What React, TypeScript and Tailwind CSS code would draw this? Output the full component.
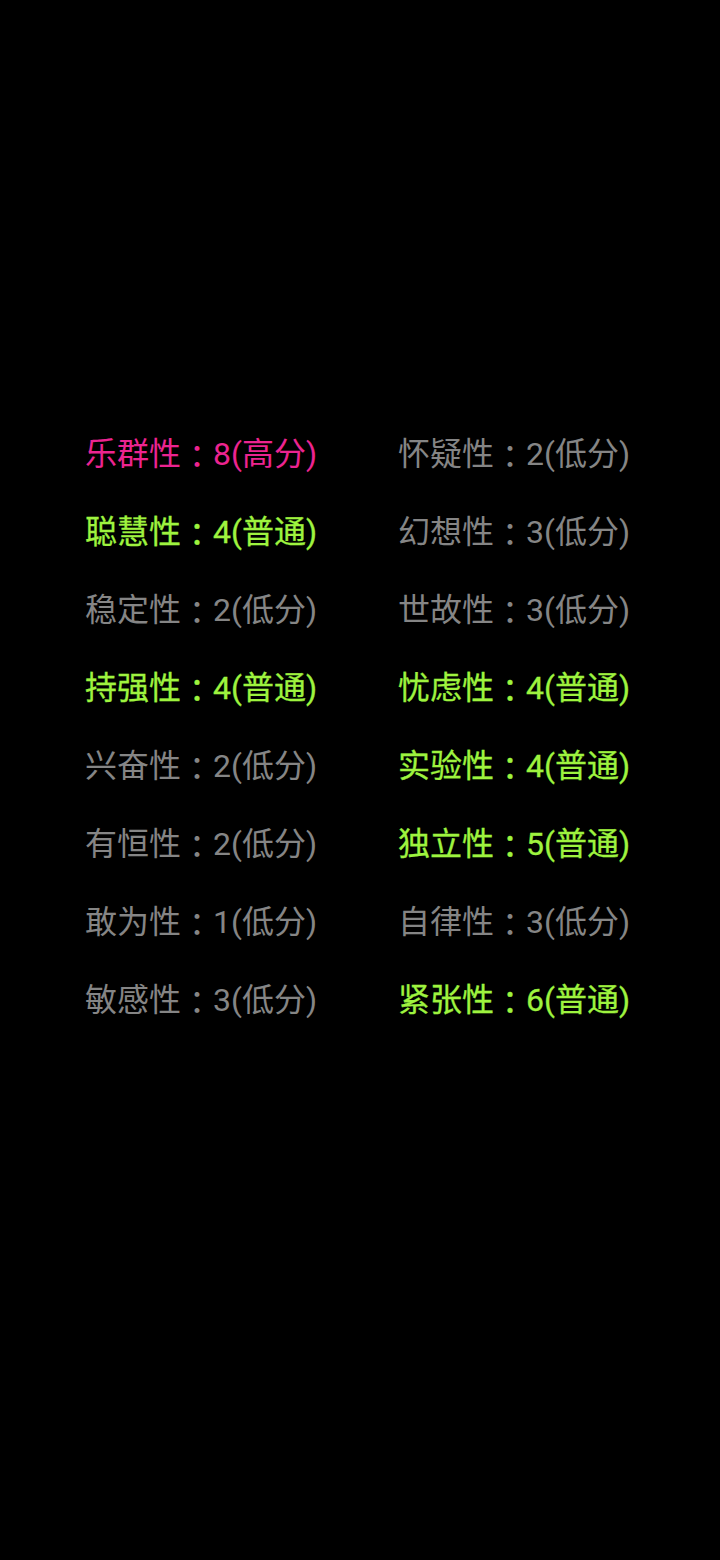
import React from "react";

type Item = { name: string; score: number; level: string };

const left: Item[] = [
  { name: "乐群性", score: 8, level: "高分" },
  { name: "聪慧性", score: 4, level: "普通" },
  { name: "稳定性", score: 2, level: "低分" },
  { name: "持强性", score: 4, level: "普通" },
  { name: "兴奋性", score: 2, level: "低分" },
  { name: "有恒性", score: 2, level: "低分" },
  { name: "敢为性", score: 1, level: "低分" },
  { name: "敏感性", score: 3, level: "低分" },
];

const right: Item[] = [
  { name: "怀疑性", score: 2, level: "低分" },
  { name: "幻想性", score: 3, level: "低分" },
  { name: "世故性", score: 3, level: "低分" },
  { name: "忧虑性", score: 4, level: "普通" },
  { name: "实验性", score: 4, level: "普通" },
  { name: "独立性", score: 5, level: "普通" },
  { name: "自律性", score: 3, level: "低分" },
  { name: "紧张性", score: 6, level: "普通" },
];

function cls(level: string) {
  if (level === "高分") return "text-[#ec2490]";
  if (level === "普通") return "text-[#9ef33f] [-webkit-text-stroke:0.3px_#9ef33f]";
  return "text-[#858585]";
}

function Row({ item }: { item: Item }) {
  return (
    <div className={`h-[78px] flex items-center text-[32px] whitespace-nowrap ${cls(item.level)}`}>
      {item.name}
      <span style={{ fontFamily: '"Noto Sans CJK JP", sans-serif' }}>：</span>
      {item.score}({item.level})
    </div>
  );
}

export default function App() {
  return (
    <div
      className="w-[720px] h-[1560px] bg-black pt-[415px] pl-[85px]"
      style={{ fontFamily: 'Roboto, "Noto Sans CJK SC", sans-serif' }}
    >
      <div className="grid grid-cols-[313px_1fr]">
        <div className="flex flex-col">
          {left.map((it) => (
            <Row key={it.name} item={it} />
          ))}
        </div>
        <div className="flex flex-col">
          {right.map((it) => (
            <Row key={it.name} item={it} />
          ))}
        </div>
      </div>
    </div>
  );
}
